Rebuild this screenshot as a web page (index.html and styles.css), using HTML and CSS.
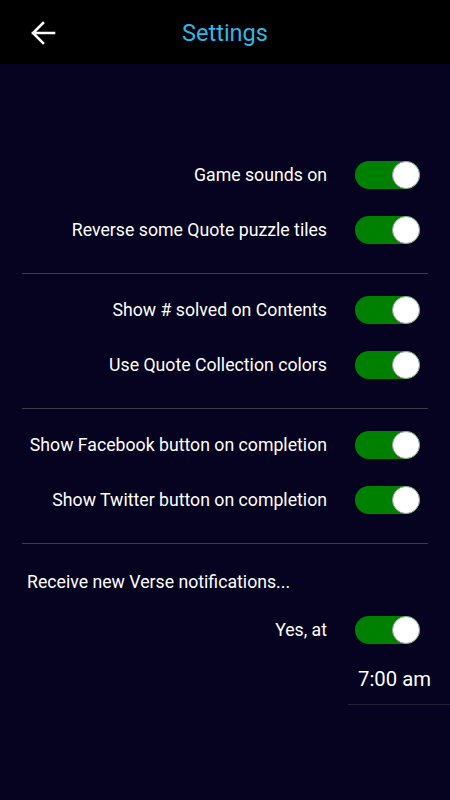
FILE: index.html
```html
<html>
<head>
  <title>Settings</title>
  <link rel="stylesheet" href="styles.css">
</head>
<body>
  <div class="topbar">
    <svg class="back" width="26" height="24" viewBox="0 0 26 24">
      <path d="M3 12H24M13 2L3 12L13 22" fill="none" stroke="#fff" stroke-width="2.6" stroke-linecap="square"/>
    </svg>
    <div class="title">Settings</div>
  </div>

  <div class="content">
    <div class="group">
      <div class="row"><span class="label">Game sounds on</span><span class="toggle"><span class="knob"></span></span></div>
      <div class="row"><span class="label">Reverse some Quote puzzle tiles</span><span class="toggle"><span class="knob"></span></span></div>
    </div>
    <div class="sep"></div>
    <div class="group">
      <div class="row"><span class="label">Show # solved on Contents</span><span class="toggle"><span class="knob"></span></span></div>
      <div class="row"><span class="label">Use Quote Collection colors</span><span class="toggle"><span class="knob"></span></span></div>
    </div>
    <div class="sep"></div>
    <div class="group">
      <div class="row"><span class="label">Show Facebook button on completion</span><span class="toggle"><span class="knob"></span></span></div>
      <div class="row"><span class="label">Show Twitter button on completion</span><span class="toggle"><span class="knob"></span></span></div>
    </div>
    <div class="sep"></div>
    <div class="notify">Receive new Verse notifications...</div>
    <div class="row"><span class="label">Yes, at</span><span class="toggle"><span class="knob"></span></span></div>
    <div class="timebox"><span class="time">7:00 am</span></div>
  </div>
</body>
</html>
```

FILE: styles.css
```css
body {
  background-color: #060320;
  margin: 0;
  padding: 0;
  font-family: Roboto, "Noto Sans", sans-serif;
  color: #fff;
  height: 800px;
}

.topbar {
  background-color: #000;
  height: 64px;
  display: flex;
  align-items: center;
  position: relative;
}

.back {
  margin-left: 30px;
  margin-top: 2px;
}

.title {
  position: absolute;
  left: 0;
  right: 0;
  top: 19px;
  text-align: center;
  color: #33b5e5;
  font-size: 23.5px;
  pointer-events: none;
}

.content {
  padding-top: 83px;
}

.row {
  height: 55px;
  display: flex;
  align-items: center;
  justify-content: flex-end;
  padding-right: 30px;
}

.label {
  font-size: 17.7px;
  margin-right: 28px;
  padding-top: 1px;
}

.toggle {
  width: 65px;
  height: 28px;
  border-radius: 14px;
  background-color: #008000;
  display: flex;
  align-items: center;
  justify-content: flex-end;
}

.knob {
  width: 26px;
  height: 26px;
  border-radius: 50%;
  background-color: #fff;
  border: 1px solid #9a9a9a;
}

.sep {
  height: 1px;
  background-color: #3c3a4c;
  margin: 16px 22px 8px 22px;
}

.notify {
  font-size: 17.7px;
  padding: 18px 0 0 27px;
  height: 32px;
  line-height: 24px;
}

.timebox {
  display: flex;
  justify-content: flex-end;
}

.time {
  width: 92px;
  padding-left: 10px;
  height: 47px;
  line-height: 45px;
  font-size: 20.3px;
  border-bottom: 1px solid #222035;
}
```
